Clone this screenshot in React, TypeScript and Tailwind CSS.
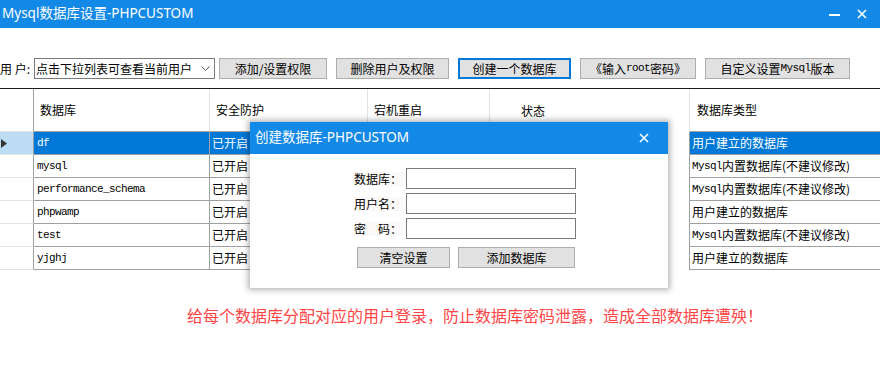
import React from 'react';

const MONO = "font-['Liberation_Mono',monospace] text-[11px] tracking-[-0.6px]";

function Mixed({ text }: { text: string }) {
  const parts = text.split(/([A-Za-z_]+)/).filter((p) => p.length > 0);
  return (
    <>
      {parts.map((p, i) =>
        /^[A-Za-z_]+$/.test(p) ? (
          <span key={i} className={MONO}>
            {p}
          </span>
        ) : (
          <span key={i}>{p}</span>
        )
      )}
    </>
  );
}

function Btn({ children, w, focus }: { children: React.ReactNode; w: string; focus?: boolean }) {
  return (
    <div
      className={`${w} h-[21px] flex items-center justify-center bg-[#e1e1e1] text-[12px] text-black ${
        focus ? 'border-2 border-[#0078d7]' : 'border border-[#adadad]'
      }`}
    >
      {children}
    </div>
  );
}

const rows = [
  { name: 'df', type: '用户建立的数据库', sel: true },
  { name: 'mysql', type: 'Mysql内置数据库(不建议修改)' },
  { name: 'performance_schema', type: 'Mysql内置数据库(不建议修改)' },
  { name: 'phpwamp', type: '用户建立的数据库' },
  { name: 'test', type: 'Mysql内置数据库(不建议修改)' },
  { name: 'yjghj', type: '用户建立的数据库' },
];

export default function App() {
  return (
    <div className="relative w-[880px] h-[369px] overflow-hidden bg-white font-['Noto_Sans_CJK_SC',sans-serif] text-black">
      {/* Title bar */}
      <div className="h-[28px] bg-[#1289e6] flex items-center justify-between">
        <div className="pl-[2px] text-[13.5px] text-white font-['Noto_Sans','Noto_Sans_CJK_SC',sans-serif] leading-none">
          Mysql数据库设置-PHPCUSTOM
        </div>
        <div className="flex items-center">
          <div className="w-[11px] h-[2px] bg-white mr-[17px] mt-[2px]" />
          <svg width="10" height="10" viewBox="0 0 10 10" className="mr-[13px]">
            <path d="M1 1 L9 9 M9 1 L1 9" stroke="white" strokeWidth="1.6" />
          </svg>
        </div>
      </div>

      {/* Toolbar */}
      <div className="mt-[30px] h-[21px] flex items-center text-[12px]">
        <div className="w-[34px] whitespace-pre">用 户:</div>
        <div className="w-[181px] h-[21px] border border-[#7a7a7a] bg-white flex items-center justify-between pl-[1px] pr-[4px]">
          <span>点击下拉列表可查看当前用户</span>
          <svg width="9" height="5" viewBox="0 0 9 5">
            <path d="M0.5 0.5 L4.5 4.5 L8.5 0.5" stroke="#555" strokeWidth="1" fill="none" />
          </svg>
        </div>
        <div className="ml-[4px] flex gap-[9px]">
          <Btn w="w-[108px]">添加/设置权限</Btn>
          <Btn w="w-[113px]">删除用户及权限</Btn>
          <Btn w="w-[113px]" focus>
            创建一个数据库
          </Btn>
          <Btn w="w-[116px]">
            <Mixed text="《输入root密码》" />
          </Btn>
          <Btn w="w-[145px]">
            <Mixed text="自定义设置Mysql版本" />
          </Btn>
        </div>
      </div>

      {/* Table */}
      <div className="mt-[9px] border-t border-[#1a1a1a]">
        <div className="flex h-[43px] text-[12px]">
          <div className="w-[34px] border-r border-[#a0a0a0] border-b border-b-[#e3e3e3]" />
          <div className="w-[176px] border-r border-[#e3e3e3] border-b border-b-[#a0a0a0] flex items-center pl-[6px]">数据库</div>
          <div className="w-[158px] border-r border-[#e3e3e3] border-b border-b-[#a0a0a0] flex items-center pl-[6px]">安全防护</div>
          <div className="w-[122px] border-r border-[#e3e3e3] border-b border-b-[#a0a0a0] flex items-center pl-[6px]">宕机重启</div>
          <div className="w-[200px] border-r border-[#e3e3e3] flex items-center pl-[31px]">状态</div>
          <div className="w-[190px] border-b border-[#a0a0a0] flex items-center pl-[7px]">数据库类型</div>
        </div>
        {rows.map((r) => (
          <div key={r.name} className="flex h-[23px] text-[12px]">
            <div
              className={`w-[34px] border-r border-[#a0a0a0] border-b border-b-[#e3e3e3] flex items-center ${
                r.sel ? 'bg-[#bcdcf4]' : 'bg-white'
              }`}
            >
              {r.sel && (
                <svg width="6" height="9" viewBox="0 0 6 9" className="ml-[1px]">
                  <path d="M0 0 L6 4.5 L0 9 Z" fill="#333" />
                </svg>
              )}
            </div>
            <div
              className={`w-[176px] border-r border-b border-[#a0a0a0] flex items-center pl-[3px] ${
                r.sel ? 'bg-[#0078d7] text-white' : ''
              }`}
            >
              <span className={MONO}>{r.name}</span>
            </div>
            <div
              className={`w-[158px] border-r border-b border-[#a0a0a0] flex items-center pl-[2px] ${
                r.sel ? 'bg-[#0078d7] text-white' : ''
              }`}
            >
              已开启
            </div>
            <div className={`w-[122px] border-r border-b border-[#a0a0a0] ${r.sel ? 'bg-[#0078d7]' : ''}`} />
            <div className="w-[200px] border-r border-[#a0a0a0]" />
            <div
              className={`w-[190px] border-b border-[#a0a0a0] flex items-center pl-[2px] ${
                r.sel ? 'bg-[#0078d7] text-white' : ''
              }`}
            >
              <Mixed text={r.type} />
            </div>
          </div>
        ))}
      </div>

      {/* Warning text */}
      <div className="mt-[35px] pl-[187px] text-[16px] leading-[20px] text-[#ff4545]">
        给每个数据库分配对应的用户登录，防止数据库密码泄露，造成全部数据库遭殃！
      </div>

      {/* Dialog */}
      <div className="absolute left-[250px] top-[122px] w-[418px] h-[166px] bg-white shadow-[0_0_6px_2px_rgba(0,0,0,0.3)] flex flex-col">
        <div className="h-[32px] bg-[#1289e6] flex items-center justify-between">
          <div className="pl-[5px] text-[13.5px] text-white font-['Noto_Sans','Noto_Sans_CJK_SC',sans-serif] leading-none">
            创建数据库-PHPCUSTOM
          </div>
          <svg width="10" height="10" viewBox="0 0 10 10" className="mr-[19px]">
            <path d="M1 1 L9 9 M9 1 L1 9" stroke="white" strokeWidth="1.6" />
          </svg>
        </div>
        <div className="pt-[14px] flex flex-col gap-[4px] text-[12px]">
          {['数据库：', '用户名：', '密　码：'].map((l) => (
            <div key={l} className="flex items-center h-[21px]">
              <div className="w-[52px] ml-[104px] bg-[#fcf9f9] leading-[14px]">{l}</div>
              <div className="w-[170px] h-[21px] border border-[#7a7a7a] bg-white" />
            </div>
          ))}
          <div className="flex mt-[4px] ml-[107px] gap-[8px]">
            <Btn w="w-[93px]">清空设置</Btn>
            <Btn w="w-[117px]">添加数据库</Btn>
          </div>
        </div>
      </div>
    </div>
  );
}
